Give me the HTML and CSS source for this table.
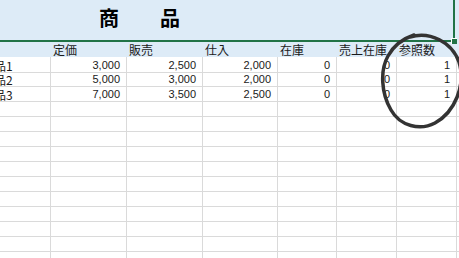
FILE: index.html
```html
<!DOCTYPE html>
<html lang="ja">
<head>
<meta charset="utf-8">
<link rel="stylesheet" href="styles.css">
</head>
<body>
<div class="page">
  <div class="top">
    <div class="title-cell">
      <span>商</span><span>品</span>
      <i class="handle"></i>
    </div>
  </div>
  <div class="sheet">
    <div class="row hdr">
      <div class="c"></div>
      <div class="c">定価</div>
      <div class="c">販売</div>
      <div class="c">仕入</div>
      <div class="c">在庫</div>
      <div class="c">売上在庫</div>
      <div class="c">参照数</div>
      <div class="c"></div>
    </div>
    <div class="row data first">
      <div class="c name">商品1</div>
      <div class="c num">3,000</div>
      <div class="c num">2,500</div>
      <div class="c num">2,000</div>
      <div class="c num">0</div>
      <div class="c num">0</div>
      <div class="c num">1</div>
      <div class="c"></div>
    </div>
    <div class="row data second">
      <div class="c name">商品2</div>
      <div class="c num">5,000</div>
      <div class="c num">3,000</div>
      <div class="c num">2,000</div>
      <div class="c num">0</div>
      <div class="c num">0</div>
      <div class="c num">1</div>
      <div class="c"></div>
    </div>
    <div class="row data">
      <div class="c name">商品3</div>
      <div class="c num">7,000</div>
      <div class="c num">3,500</div>
      <div class="c num">2,500</div>
      <div class="c num">0</div>
      <div class="c num">0</div>
      <div class="c num">1</div>
      <div class="c"></div>
    </div>
    <div class="row data"><div class="c"></div><div class="c"></div><div class="c"></div><div class="c"></div><div class="c"></div><div class="c"></div><div class="c"></div><div class="c"></div></div>
    <div class="row data"><div class="c"></div><div class="c"></div><div class="c"></div><div class="c"></div><div class="c"></div><div class="c"></div><div class="c"></div><div class="c"></div></div>
    <div class="row data"><div class="c"></div><div class="c"></div><div class="c"></div><div class="c"></div><div class="c"></div><div class="c"></div><div class="c"></div><div class="c"></div></div>
    <div class="row data"><div class="c"></div><div class="c"></div><div class="c"></div><div class="c"></div><div class="c"></div><div class="c"></div><div class="c"></div><div class="c"></div></div>
    <div class="row data"><div class="c"></div><div class="c"></div><div class="c"></div><div class="c"></div><div class="c"></div><div class="c"></div><div class="c"></div><div class="c"></div></div>
    <div class="row data"><div class="c"></div><div class="c"></div><div class="c"></div><div class="c"></div><div class="c"></div><div class="c"></div><div class="c"></div><div class="c"></div></div>
    <div class="row data"><div class="c"></div><div class="c"></div><div class="c"></div><div class="c"></div><div class="c"></div><div class="c"></div><div class="c"></div><div class="c"></div></div>
    <div class="row data"><div class="c"></div><div class="c"></div><div class="c"></div><div class="c"></div><div class="c"></div><div class="c"></div><div class="c"></div><div class="c"></div></div>
    <div class="row data"><div class="c"></div><div class="c"></div><div class="c"></div><div class="c"></div><div class="c"></div><div class="c"></div><div class="c"></div><div class="c"></div></div>
    <div class="row data"><div class="c"></div><div class="c"></div><div class="c"></div><div class="c"></div><div class="c"></div><div class="c"></div><div class="c"></div><div class="c"></div></div>
    <div class="row data"><div class="c"></div><div class="c"></div><div class="c"></div><div class="c"></div><div class="c"></div><div class="c"></div><div class="c"></div><div class="c"></div></div>
  </div>
  <svg class="mark" width="459" height="258" viewBox="0 0 459 258" aria-hidden="true">
    <path d="M410 37 C430 31 452 42 459 62 C466 85 455 112 435 123 C420 131 400 126 391 110 C381 93 380 70 388 56 C394 45 402 39 414 35" fill="none" stroke="#333" stroke-width="3.5" stroke-linecap="round"/>
  </svg>
</div>
</body>
</html>
```
FILE: styles.css
```css
html, body {
  margin: 0;
  padding: 0;
  background: #fff;
}
.page {
  position: relative;
  width: 459px;
  height: 258px;
  overflow: hidden;
  font-family: "Noto Sans CJK JP", "Liberation Sans", sans-serif;
  color: #1a1a1a;
}
.top {
  height: 42px;
  background: #ddebf7;
}
.title-cell {
  position: relative;
  box-sizing: border-box;
  width: 455px;
  height: 42px;
  border-right: 2px solid #217346;
  border-bottom: 2px solid #217346;
  display: flex;
  align-items: center;
  gap: 41px;
  padding-left: 99px;
  padding-bottom: 4px;
  font-size: 20px;
  line-height: 24px;
  font-weight: bold;
  color: #000;
}
.handle {
  position: absolute;
  right: -4px;
  bottom: -4px;
  width: 5px;
  height: 5px;
  background: #217346;
  border: 1px solid #fff;
  border-width: 1px 0 0 1px;
}
.sheet {
  margin-left: -20px;
  width: 537px;
}
.row {
  display: grid;
  grid-template-columns: 71px 76px 76px 75px 59px 60px 60px 60px;
  box-sizing: border-box;
}
.c {
  box-sizing: border-box;
  overflow: hidden;
  white-space: nowrap;
  display: flex;
  align-items: flex-end;
}
.hdr {
  height: 15px;
  background: #ddebf7;
}
.hdr .c {
  padding-left: 2px;
  font-size: 12px;
  line-height: 14px;
}
.data {
  height: 15px;
  border-bottom: 1px solid #dadada;
}
.data.first {
  height: 16px;
}
.data.second {
  height: 14px;
}
.data .c {
  border-right: 1px solid #dadada;
  line-height: 13px;
}
.name {
  padding-left: 2px;
  font-size: 12px;
}
.num {
  justify-content: flex-end;
  padding-right: 6px;
  font-family: "Liberation Sans", sans-serif;
  font-size: 11px;
}
.mark {
  position: absolute;
  left: 0;
  top: 0;
  pointer-events: none;
}
```
